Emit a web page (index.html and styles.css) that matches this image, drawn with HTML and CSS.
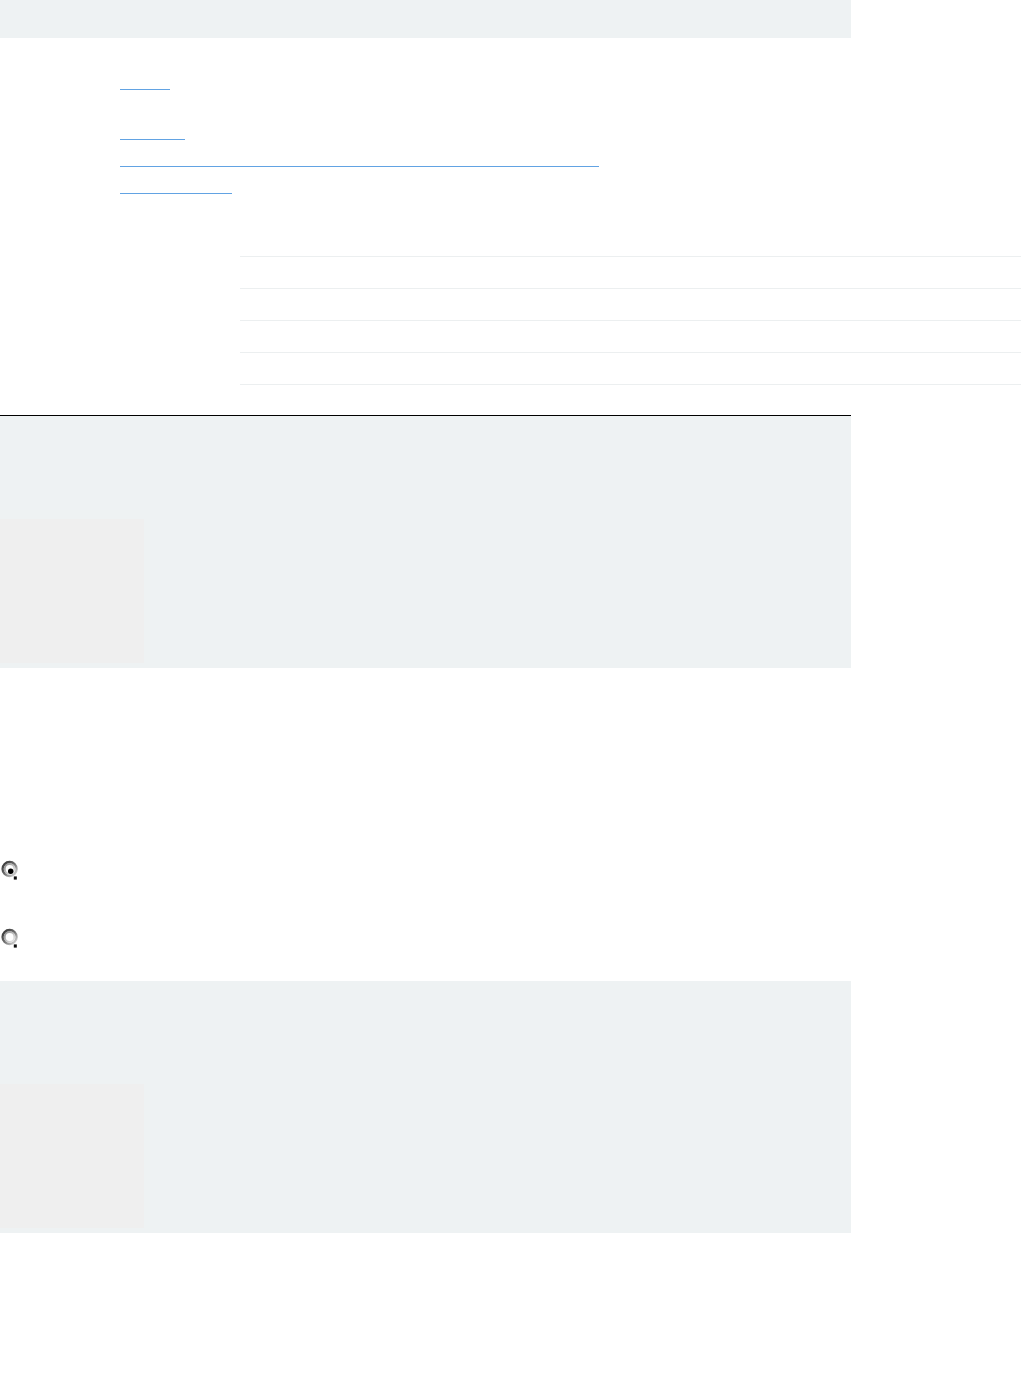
FILE: index.html
```html
<!DOCTYPE html>
<html lang="en">
<head>
<meta charset="utf-8">
<title>Page</title>
<link rel="stylesheet" href="styles.css">
</head>
<body>
<header class="topbar"></header>

<nav class="links">
  <a href="#" class="link w50" aria-label="link 1"></a>
  <a href="#" class="link w65 gap" aria-label="link 2"></a>
  <a href="#" class="link w479" aria-label="link 3"></a>
  <a href="#" class="link w112" aria-label="link 4"></a>
</nav>

<div class="rows">
  <div class="row"></div>
  <div class="row"></div>
  <div class="row"></div>
  <div class="row last"></div>
</div>

<div class="divider"></div>
<section class="panel first">
  <div class="thumb"></div>
</section>

<div class="radios">
  <label class="radio">
    <svg width="18" height="21" viewBox="0 0 18 21" aria-hidden="true">
      <defs>
        <linearGradient id="outer1" x1="0" y1="0" x2="1" y2="1">
          <stop offset="0" stop-color="#2e2e2e"/>
          <stop offset="0.5" stop-color="#707070"/>
          <stop offset="1" stop-color="#e6e6e6"/>
        </linearGradient>
        <linearGradient id="inner1" x1="0" y1="0" x2="1" y2="1">
          <stop offset="0" stop-color="#8c8c8c"/>
          <stop offset="0.5" stop-color="#bdbdbd"/>
          <stop offset="1" stop-color="#f0f0f0"/>
        </linearGradient>
      </defs>
      <circle cx="8.6" cy="9" r="7" fill="#fff" stroke="url(#outer1)" stroke-width="2.4"/>
      <circle cx="8.6" cy="9" r="4.9" fill="none" stroke="url(#inner1)" stroke-width="2"/>
      <rect x="12.8" y="16.4" width="3" height="3.2" fill="#0d0d0d"/>
      <circle cx="9.7" cy="11.2" r="2.7" fill="#000"/>
    </svg>
  </label>
  <label class="radio">
    <svg width="18" height="21" viewBox="0 0 18 21" aria-hidden="true">
      <defs>
        <linearGradient id="outer2" x1="0" y1="0" x2="1" y2="1">
          <stop offset="0" stop-color="#2e2e2e"/>
          <stop offset="0.5" stop-color="#707070"/>
          <stop offset="1" stop-color="#e6e6e6"/>
        </linearGradient>
        <linearGradient id="inner2" x1="0" y1="0" x2="1" y2="1">
          <stop offset="0" stop-color="#8c8c8c"/>
          <stop offset="0.5" stop-color="#bdbdbd"/>
          <stop offset="1" stop-color="#f0f0f0"/>
        </linearGradient>
      </defs>
      <circle cx="8.6" cy="9" r="7" fill="#fff" stroke="url(#outer2)" stroke-width="2.4"/>
      <circle cx="8.6" cy="9" r="4.9" fill="none" stroke="url(#inner2)" stroke-width="2"/>
      <rect x="12.8" y="16.4" width="3" height="3.2" fill="#0d0d0d"/>
    </svg>
  </label>
</div>

<section class="panel second">
  <div class="thumb"></div>
</section>
</body>
</html>
```

FILE: styles.css
```css
html, body {
  margin: 0;
  padding: 0;
  background: #ffffff;
  font-family: "Liberation Sans", Arial, sans-serif;
}

.topbar {
  width: 851px;
  height: 38px;
  background: #eef2f3;
}

.links {
  display: flex;
  flex-direction: column;
  align-items: flex-start;
  padding: 25px 0 0 120px;
}

.link {
  display: block;
  box-sizing: border-box;
  height: 27px;
  border-bottom: 1px solid #62a3e3;
}

.link.gap {
  margin-top: 23px;
}

.w50 { width: 50px; }
.w65 { width: 65px; }
.w479 { width: 479px; }
.w112 { width: 112px; }

.rows {
  margin: 62px 0 0 240px;
}

.row {
  box-sizing: border-box;
  height: 32px;
  border-top: 1px solid #eceff0;
}

.row.last {
  height: 33px;
  border-bottom: 1px solid #eceff0;
}

.divider {
  width: 851px;
  height: 1px;
  margin-top: 30px;
  background: #000000;
}

.panel {
  box-sizing: border-box;
  width: 851px;
  height: 252px;
  padding-top: 103px;
  background: #eef2f3;
}

.thumb {
  width: 144px;
  height: 144px;
  background: #efefef;
}

.radios {
  display: flex;
  flex-direction: column;
  padding: 192px 0 0 1px;
  gap: 47px;
}

.radio {
  display: block;
  width: 18px;
  height: 21px;
}

.radio svg {
  display: block;
}

.panel.second {
  margin-top: 32px;
}
```
